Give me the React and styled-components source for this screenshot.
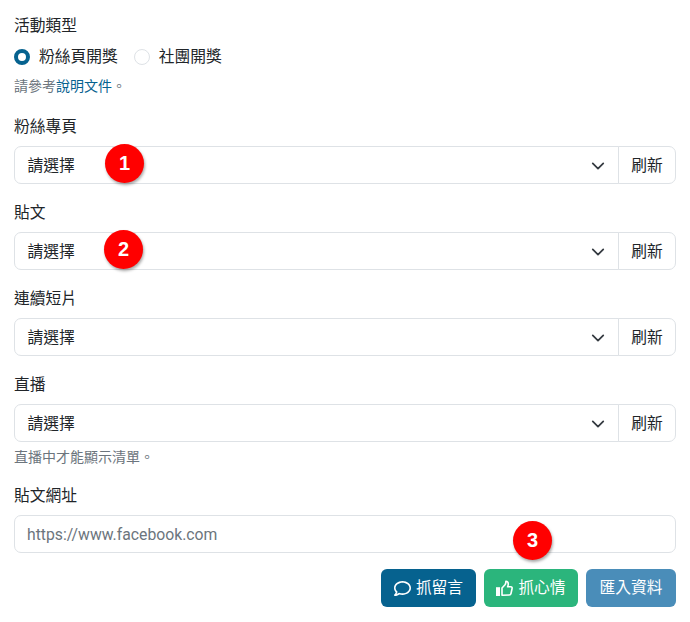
import React from 'react';
import styled, { createGlobalStyle } from 'styled-components';
import { FaRegComment } from 'react-icons/fa';

const Global = createGlobalStyle`
  html, body { margin: 0; padding: 0; background: #fff; }
  body { font-family: Roboto, "Noto Sans CJK TC", sans-serif; font-size: 15.75px; line-height: 1.5; color: #212529; }
  * { box-sizing: border-box; }
`;
const Page = styled.div`
  width: 690px; height: 622px; padding: 13px 14px 0; position: relative; overflow: hidden;
`;
const Field = styled.div`margin-bottom: ${p => p.$gap ?? 16}px;`;
const Label = styled.div`margin-bottom: 8px; height: 24px; line-height: 26px;`;
const Radios = styled.div`display: flex; align-items: center; height: 24px; margin-bottom: 2px;`;
const RadioItem = styled.label`display: flex; align-items: center; gap: 9px; margin-right: 16px;`;
const RadioDot = styled.span`
  width: 16px; height: 16px; border-radius: 50%; display: block; background: #fff;
  border: ${p => (p.$checked ? '4.5px solid #06628f' : '1px solid #dee2e6')};
`;
const Help = styled.div`margin-top: ${p => p.$top}px; font-size: 14px; line-height: 20px; color: #6c757d;`;
const HelpLink = styled.span`color: #06628f;`;
const Group = styled.div`display: flex; height: 38px; position: relative;`;
const SelectBox = styled.div`
  flex: 1; display: flex; align-items: center; justify-content: space-between;
  padding: 1px 13px 0 12.5px; border: 1px solid #dee2e6; border-radius: 7px 0 0 7px; background: #fff;
`;
const Refresh = styled.div`
  width: 58px; margin-left: -1px; padding-top: 1px; display: flex; align-items: center; justify-content: center;
  border: 1px solid #dee2e6; border-radius: 0 7px 7px 0;
`;
const Chevron = styled.svg`width: 14px; height: 14px; display: block;`;
const Input = styled.div`
  height: 38px; border: 1px solid #dee2e6; border-radius: 7px; padding: 1px 12px 0;
  display: flex; align-items: center; color: #6c757d; position: relative;
`;
const Actions = styled.div`display: flex; justify-content: flex-end; gap: 8px;`;
const Btn = styled.div`
  width: ${p => p.$w}px; height: 38px; border-radius: 6px; color: #fff;
  display: flex; align-items: center; justify-content: center; gap: 5px;
  background: ${p => p.$bg};
`;
const Badge = styled.div`
  position: absolute; width: 39px; height: 39px; border-radius: 50%; background: #f00; color: #fff;
  left: ${p => p.$x}px; top: ${p => p.$y}px;
  font: bold 20px/39px "Liberation Sans", Arial, sans-serif; text-align: center;
  box-shadow: 1px 2px 3px rgba(0,0,0,.35);
`;
const ThumbIcon = () => (
  <svg width="17" height="17" viewBox="0 0 17 17" aria-hidden="true">
    <rect x="0" y="7.2" width="4" height="8.8" fill="#fff" />
    <path
      d="M6 15.2V8l3-3.2c.8-1 .9-2 .9-3.6 1.6 0 2.4 1.2 2.4 2.8 0 1-.4 2-.7 2.8h3.2c1 0 1.5.8 1.3 1.7l-1.1 5c-.2 1-.9 1.5-1.8 1.5z"
      fill="none" stroke="#fff" strokeWidth="1.6" strokeLinejoin="round"
    />
  </svg>
);

const SelectField = ({ label, help, gap }) => (
  <Field $gap={gap}>
    <Label>{label}</Label>
    <Group>
      <SelectBox>
        請選擇
        <Chevron viewBox="0 0 16 16" fill="none" stroke="#343a40" strokeWidth="2" strokeLinecap="round" strokeLinejoin="round">
          <path d="m2 5 6 6 6-6" />
        </Chevron>
      </SelectBox>
      <Refresh>刷新</Refresh>
    </Group>
    {help && <Help $top={5}>{help}</Help>}
  </Field>
);

export default function App() {
  return (
    <Page>
      <Global />
      <Field $gap={18}>
        <Label>活動類型</Label>
        <Radios>
          <RadioItem><RadioDot $checked />粉絲頁開獎</RadioItem>
          <RadioItem><RadioDot />社團開獎</RadioItem>
        </Radios>
        <Help $top={7}>請參考<HelpLink>說明文件</HelpLink>。</Help>
      </Field>
      <SelectField label="粉絲專頁" />
      <SelectField label="貼文" />
      <SelectField label="連續短片" />
      <SelectField label="直播" help="直播中才能顯示清單。" gap={16} />
      <Field>
        <Label>貼文網址</Label>
        <Input>https://www.facebook.com</Input>
      </Field>
      <Actions>
        <Btn $bg="#06628f" $w={95}><FaRegComment size={17} />抓留言</Btn>
        <Btn $bg="#2bb57c" $w={94}><ThumbIcon />抓心情</Btn>
        <Btn $bg="#4a8db9" $w={90}>匯入資料</Btn>
      </Actions>
      <Badge $x={105} $y={144}>1</Badge>
      <Badge $x={104} $y={230}>2</Badge>
      <Badge $x={513} $y={521}>3</Badge>
    </Page>
  );
}
